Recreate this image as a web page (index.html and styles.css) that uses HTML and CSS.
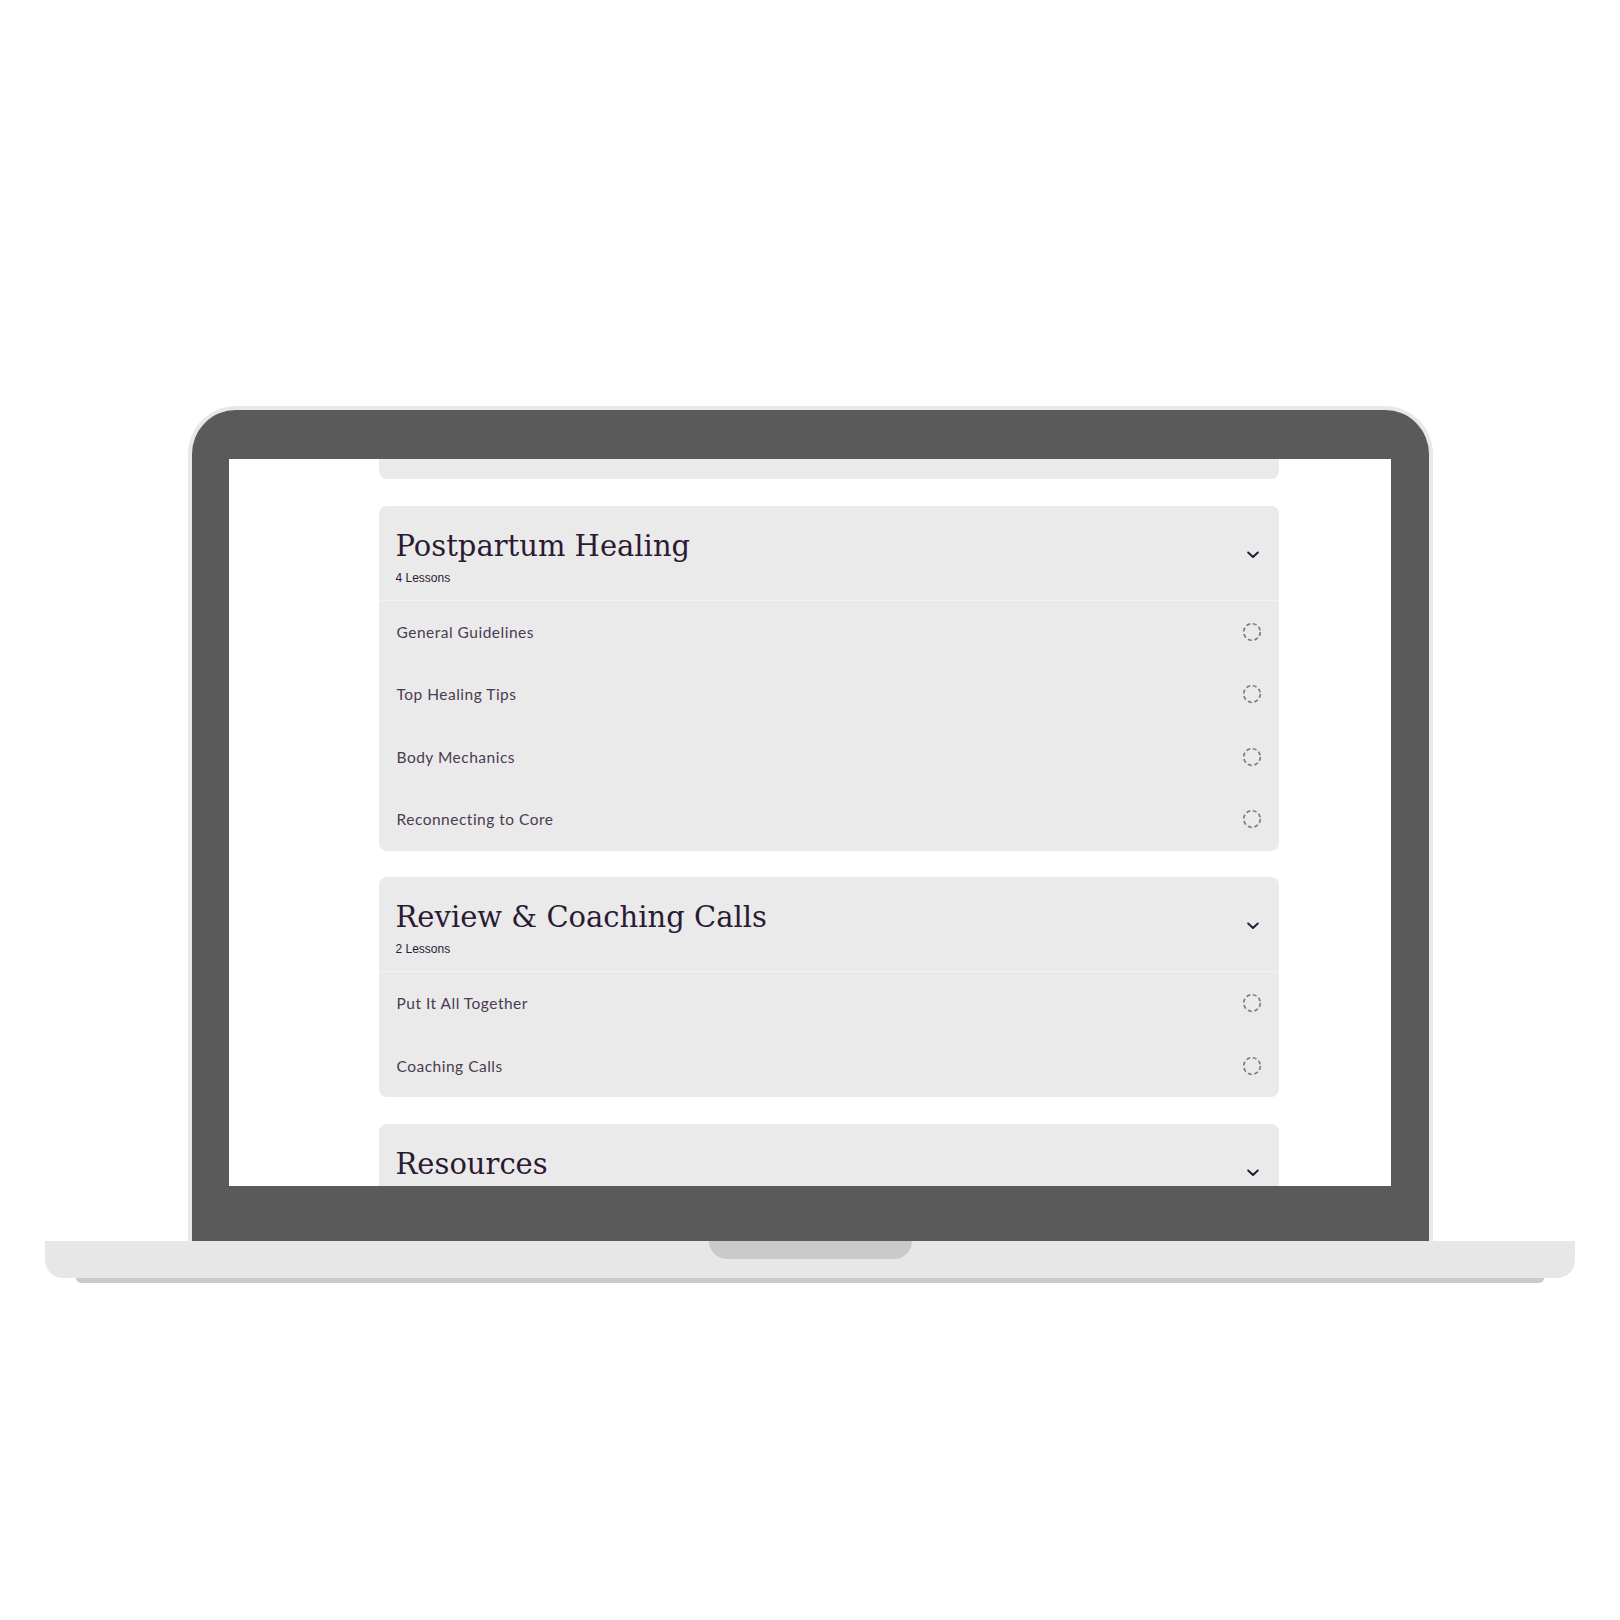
FILE: index.html
```html
<!DOCTYPE html>
<html lang="en">
<head>
<meta charset="utf-8">
<title>Course Curriculum</title>
<link rel="stylesheet" href="styles.css">
</head>
<body>
<div class="stage">
  <div class="laptop">
    <div class="lid">
      <div class="screen">
        <div class="curriculum">
          <section class="module module--scrolled"></section>

          <section class="module">
            <header class="module-head">
              <div class="module-titles">
                <h2 class="module-title">Postpartum Healing</h2>
                <p class="module-count">4 Lessons</p>
              </div>
              <svg class="chevron" width="12" height="8" viewBox="0 0 12 8"><polyline points="1.2,1.5 6,6 10.8,1.5"/></svg>
            </header>
            <ul class="lessons">
              <li class="lesson"><span>General Guidelines</span><svg class="status" width="20" height="20" viewBox="0 0 20 20"><circle cx="10" cy="10" r="8.3"/></svg></li>
              <li class="lesson"><span>Top Healing Tips</span><svg class="status" width="20" height="20" viewBox="0 0 20 20"><circle cx="10" cy="10" r="8.3"/></svg></li>
              <li class="lesson"><span>Body Mechanics</span><svg class="status" width="20" height="20" viewBox="0 0 20 20"><circle cx="10" cy="10" r="8.3"/></svg></li>
              <li class="lesson"><span>Reconnecting to Core</span><svg class="status" width="20" height="20" viewBox="0 0 20 20"><circle cx="10" cy="10" r="8.3"/></svg></li>
            </ul>
          </section>

          <section class="module">
            <header class="module-head">
              <div class="module-titles">
                <h2 class="module-title">Review &amp; Coaching Calls</h2>
                <p class="module-count">2 Lessons</p>
              </div>
              <svg class="chevron" width="12" height="8" viewBox="0 0 12 8"><polyline points="1.2,1.5 6,6 10.8,1.5"/></svg>
            </header>
            <ul class="lessons">
              <li class="lesson"><span>Put It All Together</span><svg class="status" width="20" height="20" viewBox="0 0 20 20"><circle cx="10" cy="10" r="8.3"/></svg></li>
              <li class="lesson"><span>Coaching Calls</span><svg class="status" width="20" height="20" viewBox="0 0 20 20"><circle cx="10" cy="10" r="8.3"/></svg></li>
            </ul>
          </section>

          <section class="module">
            <header class="module-head">
              <div class="module-titles">
                <h2 class="module-title">Resources</h2>
              </div>
              <svg class="chevron" width="12" height="8" viewBox="0 0 12 8"><polyline points="1.2,1.5 6,6 10.8,1.5"/></svg>
            </header>
          </section>
        </div>
      </div>
    </div>
    <div class="base"><div class="notch"></div></div>
    <div class="base-shadow"></div>
  </div>
</div>
</body>
</html>
```

FILE: styles.css
```css
* {
  box-sizing: border-box;
}

html, body {
  margin: 0;
  padding: 0;
  background: #ffffff;
}

.stage {
  width: 1620px;
  height: 1620px;
  display: flex;
  justify-content: center;
  padding-top: 406px;
}

.laptop {
  display: flex;
  flex-direction: column;
  align-items: center;
}

/* lid with its light rim */
.lid {
  width: 1245px;
  background: #5a5a5a;
  border: 4px solid #e8e8e8;
  border-bottom: 0;
  border-radius: 48px 48px 0 0;
  padding: 49px 38px 55px 37px;
}

.screen {
  width: 1162px;
  height: 727px;
  background: #ffffff;
  overflow: hidden;
}

.curriculum {
  width: 900px;
  margin-left: 150px;
  margin-top: -40px;
  display: flex;
  flex-direction: column;
  gap: 26.5px;
}

.module {
  background: #eaeaea;
  border-radius: 8px;
  overflow: hidden;
  flex-shrink: 0;
}

.module--scrolled {
  height: 60px;
}

.module-head {
  height: 95px;
  display: flex;
  justify-content: space-between;
  align-items: flex-start;
  padding: 23px 20px 0 17px;
  border-bottom: 1px solid #f2f2f2;
}

.module-title {
  margin: 0;
  font-family: "DejaVu Serif", "Liberation Serif", serif;
  font-weight: normal;
  font-size: 29px;
  line-height: 34px;
  color: #2c1a34;
  letter-spacing: 0;
}

.module-count {
  margin: 8px 0 0;
  font-family: "Liberation Sans", Arial, sans-serif;
  font-size: 12px;
  line-height: 14px;
  letter-spacing: 0;
  color: #2c1a34;
}

.chevron {
  margin-top: 22px;
  fill: none;
  stroke: #2c1a34;
  stroke-width: 2;
  stroke-linecap: round;
  stroke-linejoin: round;
}

.lessons {
  list-style: none;
  margin: 0;
  padding: 0;
}

.lesson {
  height: 62.5px;
  display: flex;
  align-items: center;
  justify-content: space-between;
  padding: 0 17px 0 18px;
  font-family: Lato, "Open Sans", sans-serif;
  font-size: 15.5px;
  letter-spacing: 0.5px;
  color: #4b3b52;
}

.status {
  fill: none;
  stroke: #7f7885;
  stroke-width: 1.7;
  stroke-dasharray: 4 2.6;
}

/* keyboard deck */
.base {
  width: 1530px;
  height: 37px;
  background: #e7e7e7;
  border-radius: 0 0 18px 18px;
  display: flex;
  justify-content: center;
}

.notch {
  width: 203px;
  height: 18px;
  background: #cacaca;
  border-radius: 0 0 18px 18px;
}

.base-shadow {
  width: 1468px;
  height: 5px;
  background: #cacaca;
  border-radius: 0 0 6px 6px;
}
```
